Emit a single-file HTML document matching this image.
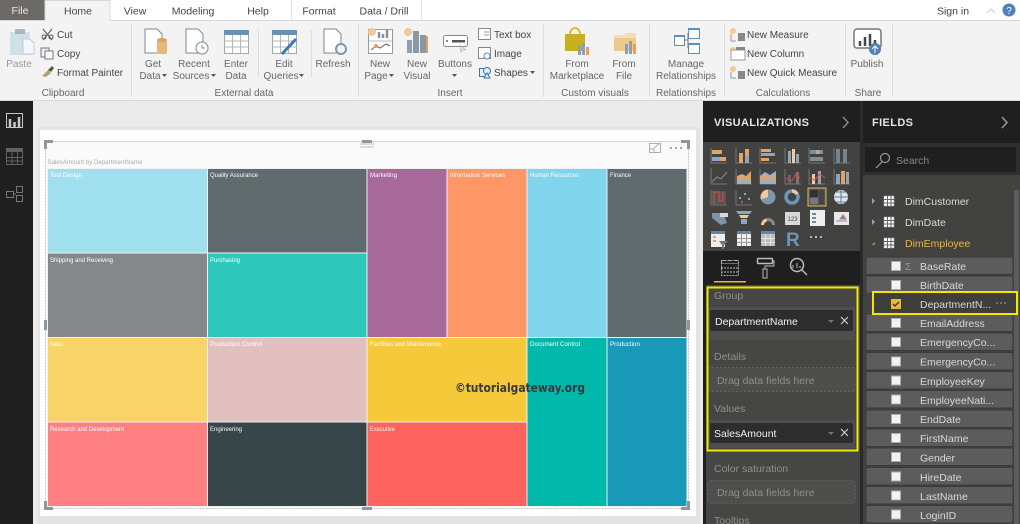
<!DOCTYPE html>
<html><head><meta charset="utf-8"><style>
html,body{margin:0;padding:0;width:1020px;height:524px;overflow:hidden;background:#eaeaea}
svg{display:block;filter:blur(.3px)}
text{font-family:"Liberation Sans",sans-serif}
.r{font-size:10px;fill:#444}
.tb{font-size:10.5px;fill:#444;text-anchor:middle}
.g{font-size:10px;fill:#666;text-anchor:middle}
.t{font-size:6px;fill:#fff}
.f{font-size:10.5px;fill:#d8d8d8}
.w{font-size:10.5px;fill:#8f8f8f}
</style></head><body>
<svg width="1020" height="524" viewBox="0 0 1020 524" xmlns="http://www.w3.org/2000/svg">
<!-- base -->
<rect width="1020" height="524" fill="#eaeaea"/>
<rect width="1020" height="21" fill="#fff"/>
<rect y="21" width="1020" height="80" fill="#f3f3f3"/>
<rect y="20" width="1020" height="1" fill="#d8d8d8"/>
<rect y="100" width="1020" height="1" fill="#d8d8d8"/>
<!-- tabs -->
<rect width="45" height="20" fill="#6c6a67"/>
<text x="20" y="14" font-size="10.5" fill="#e8e8e8" text-anchor="middle">File</text>
<path d="M45 21V0.5H110V21" fill="#f3f3f3" stroke="#d8d8d8"/>
<text x="78" y="14.5" class="tb">Home</text>
<text x="135" y="14.5" class="tb">View</text>
<text x="193" y="14.5" class="tb">Modeling</text>
<text x="258" y="14.5" class="tb">Help</text>
<path d="M291.500 20V0M421.500 20V0" stroke="#e2e2e2"/>
<text x="319" y="14.500" class="tb">Format</text>
<text x="384" y="14.500" class="tb">Data / Drill</text>
<text x="953" y="14.500" class="tb">Sign in</text>
<path d="M987 13l4-4 4 4" fill="none" stroke="#ccc"/>
<circle cx="1009" cy="10" r="6.500" fill="#4f81b5"/>
<text x="1009" y="14" font-size="10" fill="#fff" text-anchor="middle">?</text>
<!-- ribbon separators -->
<g stroke="#dcdcdc"><path d="M131.500 24V97M258.500 30V77M311.500 30V77M358.500 24V97M543.500 24V97M649.500 24V97M724.500 24V97M845.500 24V97M892.500 24V97"/></g>
<!-- clipboard -->
<rect x="10" y="32" width="20" height="23" fill="#cfe0e6"/><rect x="15" y="29" width="10" height="5" fill="#aab8bd"/>
<path d="M23 39h7l4 4v11H23z" fill="#f4f8fa" stroke="#bcd"/>
<text x="19" y="67" font-size="10" fill="#999" text-anchor="middle">Paste</text>
<path d="M43 29l9 11M52 29l-9 11" stroke="#555" fill="none"/><circle cx="44" cy="37" r="2" fill="none" stroke="#555"/><circle cx="51" cy="37" r="2" fill="none" stroke="#555"/>
<text x="57" y="38" class="r">Cut</text>
<rect x="41" y="48" width="8" height="9" fill="#eee" stroke="#778"/><rect x="45" y="51" width="8" height="8" fill="#f8f8f8" stroke="#778"/>
<text x="57" y="57" class="r">Copy</text>
<path d="M42 76l6-6 3 3-5 4z" fill="#b9a06a"/><path d="M48 70l4-4 2 2-3 4z" fill="#555"/>
<text x="57" y="76" class="r">Format Painter</text>
<text x="63" y="96" class="g">Clipboard</text>
<!-- External data icons -->
<path d="M145 29h12l5 5v19h-17z" fill="#fff" stroke="#7a8a96"/><rect x="157" y="40" width="10" height="14" rx="2" fill="#e8b878"/><ellipse cx="162" cy="40" rx="5" ry="2" fill="#cfa468"/>
<text x="153" y="67" class="g">Get</text><text x="150" y="79" class="g">Data</text><path d="M162 74h5l-2.500 3z" fill="#555"/>
<path d="M186 29h12l5 5v19h-17z" fill="#fff" stroke="#7a8a96"/><circle cx="202" cy="48" r="6" fill="#fff" stroke="#7a8a96"/><path d="M202 45v3h3" stroke="#7a8a96" fill="none"/>
<text x="194" y="67" class="g">Recent</text><text x="191" y="79" class="g">Sources</text><path d="M211 74h5l-2.500 3z" fill="#555"/>
<rect x="224.500" y="30.500" width="24" height="23" fill="#fff" stroke="#9aa"/><rect x="224" y="30" width="25" height="5" fill="#6b8fb5"/>
<path d="M224 41h25M224 47h25M232.500 35v18M240.500 35v18" stroke="#b5b5b5"/>
<text x="236" y="67" class="g">Enter</text><text x="236" y="79" class="g">Data</text>
<rect x="272.500" y="30.500" width="24" height="23" fill="#fff" stroke="#9aa"/><rect x="272" y="30" width="25" height="5" fill="#6b8fb5"/>
<path d="M272 41h25M272 47h25M280.500 35v18M288.500 35v18" stroke="#b5b5b5"/><path d="M282 54l14-15" stroke="#3d78b0" stroke-width="3"/>
<text x="284" y="67" class="g">Edit</text><text x="281" y="79" class="g">Queries</text><path d="M299 74h5l-2.500 3z" fill="#555"/>
<path d="M324 29h12l5 5v19h-17z" fill="#fff" stroke="#7a8a96"/>
<circle cx="341" cy="49" r="5" fill="#f3f3f3" stroke="#7f98ae" stroke-width="2"/>
<text x="333" y="67" class="g">Refresh</text>
<text x="244" y="96" class="g">External data</text>
<!-- Insert -->
<rect x="368.500" y="29.500" width="24" height="24" fill="#fff" stroke="#999"/><circle cx="372" cy="32" r="4" fill="#f3c99a"/>
<path d="M369 41h23" stroke="#bbb"/><path d="M379 38v-6M383 38v-4M387 38v-8" stroke="#7e92a3" stroke-width="2.500"/><path d="M371 50l5-4 4 2 6-4 4 2" stroke="#666" fill="none"/><circle cx="376" cy="46" r="2" fill="#ec9c5c"/>
<text x="380" y="67" class="g">New</text><text x="376" y="79" class="g">Page</text><path d="M389 74h5l-2.500 3z" fill="#555"/>
<circle cx="408" cy="32" r="4" fill="#f3c99a"/><rect x="407" y="40" width="5" height="13" fill="#8ea0b0"/><rect x="413" y="31" width="6" height="22" fill="#8a98a6"/><rect x="420" y="35" width="6" height="18" fill="#8a98a6"/><rect x="426" y="36" width="2" height="17" fill="#ec9c5c"/>
<text x="417" y="67" class="g">New</text><text x="417" y="79" class="g">Visual</text>
<rect x="443.500" y="35.500" width="24" height="11" rx="2" fill="#fff" stroke="#888"/><rect x="452" y="40" width="13" height="2.500" fill="#555"/><circle cx="447" cy="41" r="1" fill="#666"/><path d="M460 45l1 7 2-2 3 0z" fill="#ddd" stroke="#999" stroke-width=".5"/>
<text x="455" y="67" class="g">Buttons</text><path d="M452 74h5l-2.500 3z" fill="#555"/>
<rect x="478.500" y="28.500" width="12" height="11" fill="#fff" stroke="#7a8a96"/><path d="M484 32h5M484 35h5" stroke="#999"/>
<text x="494" y="38" class="r">Text box</text>
<rect x="478.500" y="47.500" width="12" height="11" fill="#fff" stroke="#7a8a96"/><circle cx="487" cy="56" r="3" fill="#fff" stroke="#5a88b3"/>
<text x="494" y="57" class="r">Image</text>
<rect x="479.500" y="68.500" width="8" height="8" fill="#e8eef4" stroke="#3e74a7"/><circle cx="487" cy="71" r="3.500" fill="#e8eef4" stroke="#3e74a7"/><path d="M484 78l3-5 3 5z" fill="#e8eef4" stroke="#3e74a7"/>
<text x="494" y="76" class="r">Shapes</text><path d="M530 71h5l-2.500 3z" fill="#555"/>
<text x="450" y="96" class="g">Insert</text>
<!-- custom visuals -->
<path d="M565 34h20v17h-20z" fill="#c7af1e"/><path d="M570 34a5 6 0 0 1 10 0" fill="none" stroke="#c7af1e" stroke-width="1.500"/><rect x="578" y="46" width="3" height="9" fill="#8ea0b0"/><rect x="582" y="43" width="3" height="12" fill="#8ea0b0"/><rect x="586" y="47" width="3" height="8" fill="#ec9c5c"/>
<text x="577" y="67" class="g">From</text><text x="577" y="79" class="g">Marketplace</text>
<path d="M614 35h10l2-2h10v18h-22z" fill="#f5deb5"/><path d="M614 38h22v13h-22z" fill="#ecc98d"/><rect x="625" y="44" width="3" height="10" fill="#8ea0b0"/><rect x="629" y="41" width="3" height="13" fill="#8ea0b0"/><rect x="633" y="44" width="3" height="10" fill="#ec9c5c"/>
<text x="624" y="67" class="g">From</text><text x="624" y="79" class="g">File</text>
<text x="595" y="96" class="g">Custom visuals</text>
<!-- relationships -->
<rect x="674.500" y="35.500" width="10" height="10" fill="#fff" stroke="#5d8fc0"/><rect x="688.500" y="28.500" width="11" height="10" fill="#fff" stroke="#5d8fc0"/><rect x="688.500" y="43.500" width="11" height="10" fill="#fff" stroke="#5d8fc0"/>
<path d="M684 40h4v-7M688 40v8" stroke="#777" fill="none"/><path d="M674 35h11v2h-11zM688 28h12v2h-12zM688 43h12v2h-12z" fill="#5d8fc0"/>
<text x="686" y="67" class="g">Manage</text><text x="686" y="79" class="g">Relationships</text>
<text x="686" y="96" class="g">Relationships</text>
<!-- calculations -->
<circle cx="733" cy="31" r="3" fill="#f3c99a"/><path d="M731 34v7h5" stroke="#999" fill="none"/><rect x="738" y="33" width="7" height="8" fill="#888"/>
<text x="747" y="38" class="r">New Measure</text>
<circle cx="733" cy="50" r="3" fill="#f3c99a"/><rect x="731" y="50" width="14" height="10" fill="#fff" stroke="#999"/><rect x="736" y="47" width="9" height="3" fill="#888"/>
<text x="747" y="57" class="r">New Column</text>
<circle cx="733" cy="69" r="3" fill="#f3c99a"/><path d="M731 72v6h5" stroke="#999" fill="none"/><rect x="738" y="71" width="7" height="8" fill="#888"/>
<text x="747" y="76" class="r">New Quick Measure</text>
<text x="783" y="96" class="g">Calculations</text>
<!-- share -->
<rect x="854" y="29" width="27" height="19" rx="3" fill="#fff" stroke="#777" stroke-width="1.500"/>
<path d="M860 46v-5M865 46v-9M870 46v-12M875 46v-6" stroke="#444" stroke-width="2.500"/>
<circle cx="875" cy="49" r="6" fill="#4f81b5"/><path d="M875 53v-7M872 49l3-3 3 3" stroke="#fff" fill="none"/>
<text x="867" y="67" class="g">Publish</text>
<text x="868" y="96" class="g">Share</text>

<!-- left nav -->
<rect y="101" width="33" height="423" fill="#1f1f1f"/>
<rect x="6.500" y="113.500" width="16" height="14" fill="none" stroke="#c8c8c8"/><path d="M10 127v-8M14.500 127v-5M19 127v-10" stroke="#c8c8c8" stroke-width="2.500"/>
<rect x="6.500" y="148.500" width="16" height="16" fill="none" stroke="#626262"/><rect x="6" y="148" width="17" height="4" fill="#626262"/><path d="M6 157.500h17M6 161h17M12 152v13M17.500 152v13" stroke="#626262"/>
<rect x="6.500" y="191.500" width="7" height="6" fill="none" stroke="#777"/><rect x="16.500" y="186.500" width="6" height="6" fill="none" stroke="#777"/><rect x="16.500" y="195.500" width="6" height="6" fill="none" stroke="#777"/><path d="M13 194h3" stroke="#777"/>

<!-- canvas -->
<rect x="37" y="127" width="663" height="397" fill="#e3e3e3"/>
<rect x="40" y="130" width="656" height="386" fill="#fff"/>
<rect x="46" y="141" width="642" height="27" fill="#fafafa"/>
<text x="47.500" y="164" font-size="6" fill="#aaa" textLength="95" lengthAdjust="spacingAndGlyphs">SalesAmount by DepartmentName</text>
<path d="M360 144h14M360 147h14" stroke="#b5bec5"/>
<rect x="649.500" y="143.500" width="11" height="9" fill="none" stroke="#a8b0b5"/><path d="M654 148l6-5M649 149h5v4" stroke="#a8b0b5" fill="none"/>
<circle cx="671" cy="148" r="1" fill="#888"/><circle cx="676" cy="148" r="1" fill="#888"/><circle cx="681" cy="148" r="1" fill="#888"/>
<!-- treemap -->
<g stroke="#eef2f3" stroke-width="1">
<rect x="47.500" y="168.500" width="160" height="84.500" fill="#9fdfee"/>
<rect x="207.500" y="168.500" width="159.500" height="84.500" fill="#5f6b6d"/>
<rect x="47.500" y="253" width="160" height="84.500" fill="#84888b"/>
<rect x="207.500" y="253" width="159.500" height="84.500" fill="#2ec8bc"/>
<rect x="367" y="168.500" width="80" height="169" fill="#a66999"/>
<rect x="447" y="168.500" width="80" height="169" fill="#fe9666"/>
<rect x="527" y="168.500" width="80" height="169" fill="#80d4eb"/>
<rect x="607" y="168.500" width="80" height="169" fill="#5f6b6d"/>
<rect x="47.500" y="337.500" width="160" height="84.500" fill="#f8d468"/>
<rect x="207.500" y="337.500" width="159.500" height="84.500" fill="#e2c0c0"/>
<rect x="47.500" y="422" width="160" height="84.500" fill="#fe8083"/>
<rect x="207.500" y="422" width="159.500" height="84.500" fill="#374649"/>
<rect x="367" y="337.500" width="160" height="84.500" fill="#f5c93a"/>
<rect x="367" y="422" width="160" height="84.500" fill="#fd625e"/>
<rect x="527" y="337.500" width="80" height="169" fill="#01b8aa"/>
<rect x="607" y="337.500" width="80" height="169" fill="#1a98b7"/>
</g>
<text x="50" y="177" class="t" textLength="32" lengthAdjust="spacingAndGlyphs">Tool Design</text>
<text x="210" y="177" class="t" textLength="48" lengthAdjust="spacingAndGlyphs">Quality Assurance</text>
<text x="50" y="262" class="t" textLength="63" lengthAdjust="spacingAndGlyphs">Shipping and Receiving</text>
<text x="210" y="262" class="t" textLength="30" lengthAdjust="spacingAndGlyphs">Purchasing</text>
<text x="370" y="177" class="t" textLength="27" lengthAdjust="spacingAndGlyphs">Marketing</text>
<text x="450" y="177" class="t" textLength="55" lengthAdjust="spacingAndGlyphs">Information Services</text>
<text x="530" y="177" class="t" textLength="49" lengthAdjust="spacingAndGlyphs">Human Resources</text>
<text x="610" y="177" class="t" textLength="21" lengthAdjust="spacingAndGlyphs">Finance</text>
<text x="50" y="346" class="t" textLength="13" lengthAdjust="spacingAndGlyphs">Sales</text>
<text x="210" y="346" class="t" textLength="52" lengthAdjust="spacingAndGlyphs">Production Control</text>
<text x="370" y="346" class="t" textLength="71" lengthAdjust="spacingAndGlyphs">Facilities and Maintenance</text>
<text x="530" y="346" class="t" textLength="50" lengthAdjust="spacingAndGlyphs">Document Control</text>
<text x="610" y="346" class="t" textLength="30" lengthAdjust="spacingAndGlyphs">Production</text>
<text x="50" y="431" class="t" textLength="74" lengthAdjust="spacingAndGlyphs">Research and Development</text>
<text x="210" y="431" class="t" textLength="32" lengthAdjust="spacingAndGlyphs">Engineering</text>
<text x="370" y="431" class="t" textLength="25" lengthAdjust="spacingAndGlyphs">Executive</text>
<text x="455" y="392" font-size="12" font-weight="bold" fill="#333a40" textLength="130" lengthAdjust="spacingAndGlyphs" style="font-family:'DejaVu Sans',sans-serif">©tutorialgateway.org</text>
<!-- frame + handles -->
<rect x="45.500" y="141.500" width="643" height="367" fill="none" stroke="#c4c4c4" stroke-dasharray="2 1"/>
<g fill="#8b98a3">
<path d="M44 140h9v3h-6v6h-3z"/><path d="M690 140h-9v3h6v6h3z"/>
<path d="M44 510h9v-3h-6v-6h-3z"/><path d="M690 510h-9v-3h6v-6h3z"/>
<rect x="362" y="140" width="10" height="3"/><rect x="362" y="507" width="10" height="3"/>
<rect x="44" y="320" width="3" height="10"/><rect x="687" y="320" width="3" height="10"/>
</g>

<!-- right panels -->
<rect x="700" y="101" width="320" height="423" fill="#1f1f1f"/>
<rect x="700" y="101" width="3" height="423" fill="#eaeaea"/>
<rect x="703" y="142" width="157" height="109" fill="#424240"/>
<rect x="706" y="285" width="154" height="239" fill="#464644"/>
<rect x="860" y="101" width="3" height="423" fill="#2a2a2a"/>
<text x="714" y="126" font-size="11" font-weight="bold" fill="#e6e6e6" textLength="95" lengthAdjust="spacing">VISUALIZATIONS</text>
<path d="M843 117l5 5.500-5 5.500" fill="none" stroke="#888" stroke-width="1.500"/>
<text x="872" y="126" font-size="11" font-weight="bold" fill="#e6e6e6" textLength="41" lengthAdjust="spacing">FIELDS</text>
<path d="M1002 117l5 5.500-5 5.500" fill="none" stroke="#999" stroke-width="1.500"/>

<!-- gallery icons -->
<g>
<path d="M711 148v15h16" stroke="#777" fill="none"/><rect x="712" y="150" width="10" height="4" fill="#e0a468"/><rect x="712" y="157" width="14" height="4" fill="#8ea6bc"/><rect x="720" y="157" width="6" height="4" fill="#e0a468"/>
<path d="M736 148v15h16" stroke="#777" fill="none"/><rect x="739" y="153" width="4" height="10" fill="#e0a468"/><rect x="745" y="149" width="4" height="14" fill="#e0a468"/><rect x="745" y="156" width="4" height="7" fill="#8ea6bc"/>
<path d="M760 148v15h16" stroke="#777" fill="none"/><rect x="761" y="149" width="10" height="3" fill="#e0a468"/><rect x="761" y="153" width="14" height="3" fill="#8ea6bc"/><rect x="761" y="158" width="8" height="3" fill="#e0a468"/>
<path d="M785 148v15h16" stroke="#777" fill="none"/><rect x="788" y="151" width="3" height="12" fill="#8ea6bc"/><rect x="792" y="149" width="3" height="14" fill="#f2c9a0"/><rect x="796" y="154" width="3" height="9" fill="#8ea6bc"/>
<path d="M809 148v15h16" stroke="#777" fill="none"/><rect x="810" y="150" width="13" height="4" fill="#808c96"/><rect x="810" y="157" width="13" height="4" fill="#808c96"/><rect x="816" y="150" width="4" height="4" fill="#aaa"/>
<path d="M834 148v15h16" stroke="#777" fill="none"/><rect x="836" y="149" width="4" height="14" fill="#76838e"/><rect x="843" y="149" width="4" height="14" fill="#76838e"/>
<path d="M711 168v16h16" stroke="#777" fill="none"/><path d="M712 182l5-5 4 2 6-7" stroke="#888" fill="none"/>
<path d="M736 169v15h16" stroke="#777" fill="none"/><path d="M737 184v-8l5-2 4 2 5-5v13z" fill="#e0a468"/><path d="M737 184v-5l6 0 8 2v3z" fill="#9eb0c0"/>
<path d="M760 169v15h16" stroke="#777" fill="none"/><path d="M760 176l5-4 5 3 6-4v13h-16z" fill="#9eb0c0"/><path d="M760 177l5-2 5 3 6-3v5h-16z" fill="#e0a468"/>
<path d="M785 169v15h16" stroke="#777" fill="none"/><rect x="788" y="175" width="3" height="9" fill="#666"/><rect x="796" y="172" width="3" height="12" fill="#777"/><path d="M786 178l6 3 4-7 4 4" stroke="#e04a3a" fill="none"/>
<path d="M809 169v15h16" stroke="#777" fill="none"/><rect x="812" y="174" width="3" height="10" fill="#f2c9a0"/><rect x="818" y="171" width="3" height="13" fill="#8ea6bc"/><path d="M810 178l5 2 5-6 5 4" stroke="#e04a3a" fill="none"/>
<path d="M834 169v15h16" stroke="#777" fill="none"/><rect x="836" y="174" width="4" height="10" fill="#8ea6bc"/><rect x="841" y="171" width="4" height="13" fill="#e0a468"/><rect x="846" y="172" width="3" height="12" fill="#8ea6bc"/>
<path d="M711 190v15h16" stroke="#777" fill="none"/><rect x="712" y="191" width="14" height="13" fill="#555"/><path d="M714 204v-12h5v9h4v-9" stroke="#e04a3a" fill="none"/>
<path d="M736 190v15h16" stroke="#777" fill="none"/><g fill="#8ea6bc"><rect x="739" y="197" width="2" height="2"/><rect x="744" y="193" width="2" height="2"/><rect x="748" y="198" width="2" height="2"/></g><rect x="741" y="201" width="2" height="2" fill="#e04a3a"/>
<circle cx="768" cy="197" r="7.500" fill="#7f95aa"/><path d="M768 197v-7.500a7.500 7.500 0 0 0-7 10z" fill="#f0c89e"/>
<circle cx="792" cy="197" r="6" fill="none" stroke="#6e94bb" stroke-width="3.500"/><path d="M792 191a6 6 0 0 1 5 3" fill="none" stroke="#f0c89e" stroke-width="3.500"/>
<rect x="808" y="188" width="18" height="18" fill="#555" stroke="#e0b95a"/><rect x="810" y="190" width="8" height="7" fill="#333"/><rect x="810" y="198" width="8" height="6" fill="#777"/><rect x="819" y="190" width="5" height="14" fill="#444"/>
<circle cx="841" cy="197" r="7" fill="#dfe6ee"/><path d="M834 197h14M841 190v14M836 192h10M836 202h10" stroke="#5e7a96"/>
<path d="M712 213h16l-3 5 2 5-6 2-4-3-5-4z" fill="#7d93a6"/><path d="M720 213h8v4h-8z" fill="#d9d9d9"/>
<path d="M736 211h16l-2 3h-12zM739 215h10l-2 3h-6zM741 219h6v5h-6z" fill="#8ea6bc"/><path d="M739 215h10l-2 3h-6z" fill="#f0c89e"/>
<path d="M761 225a7 7 0 0 1 14 0h-3a4 4 0 0 0-8 0z" fill="#8a8a8a"/><path d="M761 225a7 7 0 0 1 5-6.500l1 3a4 4 0 0 0-3 3.500z" fill="#f0c89e"/>
<rect x="785" y="212" width="15" height="13" fill="#d8d8d8"/><text x="792.500" y="221" font-size="6" text-anchor="middle" fill="#444">123</text>
<rect x="810" y="210" width="15" height="16" fill="#eee"/><path d="M812 214h4M812 218h4M812 222h4" stroke="#6f8aa5" stroke-width="2"/>
<rect x="834" y="212" width="15" height="13" fill="#e8e8e8"/><path d="M840 219l3-4 3 4zM836 221h11" fill="#e05a5a" stroke="#88a"/>
<rect x="711" y="231" width="14" height="16" fill="#eee"/><rect x="711" y="231" width="14" height="3" fill="#5e86ad"/><path d="M713 237h3M713 241h3" stroke="#e0a468" stroke-width="2"/><path d="M719 241h9l-4 4v4h-2v-4z" fill="#777"/>
<rect x="737" y="231" width="14" height="15" fill="#eee"/><rect x="737" y="231" width="14" height="3" fill="#5e86ad"/><path d="M737 238.500h14M737 242.500h14M741.500 234v12M746.500 234v12" stroke="#999"/>
<rect x="761" y="231" width="14" height="15" fill="#b8c0c6"/><rect x="761" y="231" width="14" height="3" fill="#5e86ad"/><path d="M761 238.500h14M761 242.500h14M765.500 234v12M770.500 234v12" stroke="#e4e4e4"/>
<text x="786" y="246" font-size="19" font-weight="bold" fill="#6e94bb">R</text>
<circle cx="811" cy="237" r="1" fill="#ddd"/><circle cx="816" cy="237" r="1" fill="#ddd"/><circle cx="821" cy="237" r="1" fill="#ddd"/>
</g>
<!-- tabs in viz pane -->
<rect x="721.500" y="260.500" width="17" height="3" fill="none" stroke="#bbb" stroke-dasharray="1 1"/><path d="M721 268h17M721 272h17" stroke="#bbb" stroke-dasharray="2 1"/><rect x="721.500" y="260.500" width="17" height="15" fill="none" stroke="#aaa" stroke-dasharray="2 1"/>
<rect x="714" y="281" width="32" height="1.500" fill="#e8b93a"/>
<rect x="757.500" y="258.500" width="15" height="5" rx="1" fill="none" stroke="#bbb" stroke-width="1.500"/><path d="M772 261h2v5h-9v3" fill="none" stroke="#bbb"/><rect x="763" y="269" width="4" height="9" fill="none" stroke="#bbb"/>
<circle cx="797" cy="265" r="6.500" fill="none" stroke="#bbb" stroke-width="1.500"/><path d="M802 270l5 5" stroke="#bbb" stroke-width="1.500"/><path d="M793 268v-3M797 268v-5M800 268v-2" stroke="#bbb"/>

<!-- wells -->
<text x="714" y="299" class="w">Group</text>
<rect x="708" y="307" width="147" height="33" fill="#4e4e4c"/>
<rect x="710" y="310" width="143" height="21" rx="2" fill="#2d2d2d"/>
<text x="715" y="325" font-size="10.500" fill="#f0f0f0">DepartmentName</text>
<path d="M828 320h6l-3 3z" fill="#777"/><path d="M841 317l7 7M848 317l-7 7" stroke="#ccc" stroke-width="1.200"/>
<text x="714" y="360" class="w">Details</text>
<rect x="708" y="367.500" width="147" height="24" fill="#4e4e4c" stroke="#5e5e5c" stroke-dasharray="2 2"/>
<text x="717" y="384" class="w">Drag data fields here</text>
<text x="714" y="412" class="w">Values</text>
<rect x="708" y="420" width="147" height="28" fill="#4e4e4c"/>
<rect x="710" y="423" width="143" height="20" rx="2" fill="#2d2d2d"/>
<text x="714" y="437" font-size="10.500" fill="#f0f0f0">SalesAmount</text>
<path d="M828 432h6l-3 3z" fill="#777"/><path d="M841 429l7 7M848 429l-7 7" stroke="#ccc" stroke-width="1.200"/>
<text x="714" y="472" class="w">Color saturation</text>
<rect x="707.500" y="480.500" width="148" height="23" rx="3" fill="#4e4e4c" stroke="#5e5e5c" stroke-dasharray="2 2"/>
<text x="717" y="496" class="w">Drag data fields here</text>
<text x="714" y="524" class="w">Tooltips</text>
<rect x="707.500" y="287.500" width="150" height="163" fill="none" stroke="#f3e600" stroke-width="2"/>

<!-- fields -->
<rect x="863" y="143" width="157" height="32" fill="#2e2e2e"/>
<rect x="863" y="175" width="157" height="349" fill="#424240"/>
<rect x="865" y="147" width="151" height="25" fill="#1f1f1f"/>
<circle cx="885" cy="158" r="4.500" fill="none" stroke="#999" stroke-width="1.200"/><path d="M882 162l-6 6" stroke="#999" stroke-width="1.200"/>
<text x="896" y="164" font-size="10.500" fill="#888">Search</text>
<rect x="1014" y="190" width="5" height="334" fill="#5c5c5c"/>
<g>
<path d="M872 198v6l3-3z" fill="#8aa"/><path d="M872 219v6l3-3z" fill="#8aa"/><path d="M871 245l4-3v3z" fill="#888"/>
<g fill="#fff" stroke="#aaa" stroke-width=".5"><rect x="884" y="196" width="10" height="10"/><rect x="884" y="217" width="10" height="10"/><rect x="884" y="238" width="10" height="10"/></g>
<g stroke="#666"><path d="M884 199.500h10M884 203h10M887.500 196v10M891 196v10M884 220.500h10M884 224h10M887.500 217v10M891 217v10M884 241.500h10M884 245h10M887.500 238v10M891 238v10"/></g>
<text x="905" y="205" class="f">DimCustomer</text>
<text x="905" y="226" class="f">DimDate</text>
<text x="905" y="247" font-size="10.500" fill="#e8b93a">DimEmployee</text>
</g>
<g fill="#5c5c5c" stroke="#3a3a3a">
<rect x="866" y="257" width="147" height="17.500" rx="1.500"/>
<rect x="866" y="276" width="147" height="17.500" rx="1.500"/>
<rect x="866" y="314" width="147" height="17.500" rx="1.500"/>
<rect x="866" y="333" width="147" height="17.500" rx="1.500"/>
<rect x="866" y="352.500" width="147" height="17.500" rx="1.500"/>
<rect x="866" y="371.500" width="147" height="17.500" rx="1.500"/>
<rect x="866" y="390.500" width="147" height="17.500" rx="1.500"/>
<rect x="866" y="410" width="147" height="17.500" rx="1.500"/>
<rect x="866" y="429" width="147" height="17.500" rx="1.500"/>
<rect x="866" y="448" width="147" height="17.500" rx="1.500"/>
<rect x="866" y="467.500" width="147" height="17.500" rx="1.500"/>
<rect x="866" y="486.500" width="147" height="17.500" rx="1.500"/>
<rect x="866" y="505.500" width="147" height="17.500" rx="1.500"/>
</g>
<g fill="#f2f2f2" stroke="#aab" stroke-width="1">
<rect x="891.500" y="261.500" width="9" height="9"/><rect x="891.500" y="280.500" width="9" height="9"/>
<rect x="891.500" y="318.500" width="9" height="9"/><rect x="891.500" y="337.500" width="9" height="9"/><rect x="891.500" y="357" width="9" height="9"/><rect x="891.500" y="376" width="9" height="9"/><rect x="891.500" y="395" width="9" height="9"/><rect x="891.500" y="414.500" width="9" height="9"/><rect x="891.500" y="433.500" width="9" height="9"/><rect x="891.500" y="452.500" width="9" height="9"/><rect x="891.500" y="472" width="9" height="9"/><rect x="891.500" y="491" width="9" height="9"/><rect x="891.500" y="510" width="9" height="9"/>
</g>
<text x="905" y="270" font-size="10" fill="#999">Σ</text>
<g>
<text x="920" y="270" class="f">BaseRate</text>
<text x="920" y="289" class="f">BirthDate</text>
<text x="920" y="327" class="f">EmailAddress</text>
<text x="920" y="346" class="f">EmergencyCo...</text>
<text x="920" y="365.500" class="f">EmergencyCo...</text>
<text x="920" y="385" class="f">EmployeeKey</text>
<text x="920" y="404" class="f">EmployeeNati...</text>
<text x="920" y="423" class="f">EndDate</text>
<text x="920" y="442" class="f">FirstName</text>
<text x="920" y="461.500" class="f">Gender</text>
<text x="920" y="481" class="f">HireDate</text>
<text x="920" y="500" class="f">LastName</text>
<text x="920" y="519" class="f">LoginID</text>
</g>
<rect x="873" y="292" width="144" height="22" fill="#3e3e3c" stroke="#f3e600" stroke-width="2"/>
<rect x="891" y="299" width="10" height="10" fill="#e8b93a"/><path d="M893 304l2 2 4-4" stroke="#333" fill="none" stroke-width="1.300"/>
<text x="920" y="308" class="f">DepartmentN...</text>
<circle cx="997" cy="303" r=".8" fill="#aaa"/><circle cx="1001" cy="303" r=".8" fill="#aaa"/><circle cx="1005" cy="303" r=".8" fill="#aaa"/>
</svg>
</body></html>
